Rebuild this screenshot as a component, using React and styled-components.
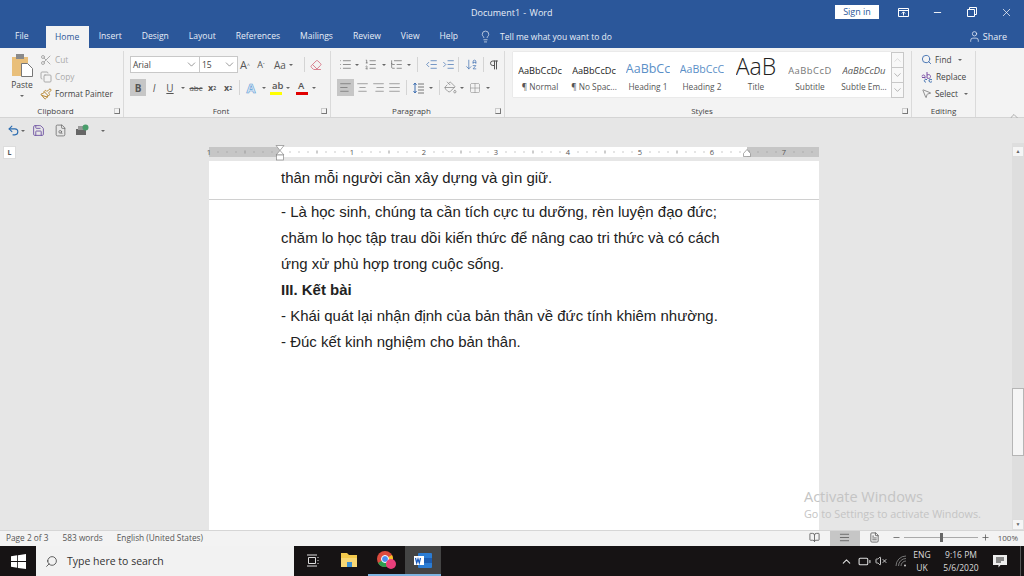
import React from 'react'
import styled, { createGlobalStyle } from 'styled-components'
import {
    Scissors, Copy, Paintbrush, Lightbulb, User, X, Minus, Search, ChevronUp, ChevronDown,
    AlignLeft, AlignCenter, AlignRight, AlignJustify, List, ListOrdered, ListTree, IndentDecrease,
    IndentIncrease, Pilcrow, Eraser, Undo2, Save, FileSearch, MousePointer2, PaintBucket, Grid2x2,
    ArrowDownAZ, BookOpen, FileText, VolumeX, Battery, Plus
} from 'lucide-react'

const GlobalStyle = createGlobalStyle`
    html, body { margin: 0; padding: 0; }
    body { width: 1024px; height: 576px; overflow: hidden; font-family: "Open Sans", "Liberation Sans", sans-serif; }
`

const Caret = () => <CaretMark />

const Ruler = () => {
    const ticks = []
    for (let i = 0; i < 8.5; i += 0.125) {
        if (i % 1 === 0) continue
        const half = i % 0.5 === 0
        ticks.push(<rect key={i} x={i * 72 - 0.5} y={half ? 3.5 : 4.5} width="1" height={half ? 3 : 1} fill="#999" />)
    }
    return (
        <RulerSvg width="610" height="10" viewBox="0 0 610 10">
            <rect width="610" height="10" fill="#fff" />
            <rect width="71" height="10" fill="#c6c6c6" />
            <rect x="538" width="72" height="10" fill="#c6c6c6" />
            {ticks}
            {[[0, 1], [143, 1], [215, 2], [287, 3], [359, 4], [431, 5], [503, 6], [575, 7]].map(([x, n]) => (
                <text key={x} x={x} y="8" fontSize="7.5" fontFamily="Open Sans" fill="#555" textAnchor="middle">{n}</text>
            ))}
            <path d="M67 -1.500h8l-4 5zM71 3.500l-4 4.500h8z" fill="#fff" stroke="#888" strokeWidth=".7" />
            <rect x="67.500" y="8" width="7" height="5" fill="#fff" stroke="#888" strokeWidth=".7" />
            <path d="M538 2.500l-3.500 4v3h7v-3z" fill="#fff" stroke="#888" strokeWidth=".7" />
        </RulerSvg>
    )
}

const styles = [
    { sample: 'AaBbCcDc', label: '¶ Normal', size: 9.2, color: '#222' },
    { sample: 'AaBbCcDc', label: '¶ No Spac...', size: 9.2, color: '#222' },
    { sample: 'AaBbCc', label: 'Heading 1', size: 12.5, color: '#5b8fc7' },
    { sample: 'AaBbCcC', label: 'Heading 2', size: 10.6, color: '#5b8fc7' },
    { sample: 'AaB', label: 'Title', size: 23, color: '#222', big: true },
    { sample: 'AaBbCcD', label: 'Subtitle', size: 9.4, color: '#777', spaced: true },
    { sample: 'AaBbCcDu', label: 'Subtle Em...', size: 9.4, color: '#555', italic: true },
]

const tabs = ['File', 'Home', 'Insert', 'Design', 'Layout', 'References', 'Mailings', 'Review', 'View', 'Help']

export default function App() {
    return (
        <Screen>
            <GlobalStyle />
            <TitleBar>
                <DocTitle>Document1 - Word</DocTitle>
                <SignIn>Sign in</SignIn>
                <WinButtons>
                    <WinButton><svg width="11" height="9" viewBox="0 0 11 9" fill="none" stroke="#fff"><path d="M.5.5h10v8H.5zM.5 2.500h10M5.500 7.500V4M3.800 5.500l1.700-1.700 1.700 1.700" /></svg></WinButton>
                    <WinButton><Minus size={11} color="#fff" /></WinButton>
                    <WinButton><svg width="10" height="10" viewBox="0 0 10 10" fill="none" stroke="#fff"><path d="M.5 2.500h7v7h-7zM2.500 2.500v-2h7v7h-2" /></svg></WinButton>
                    <WinButton><X size={13} color="#fff" strokeWidth={1.3} /></WinButton>
                </WinButtons>
            </TitleBar>

            <TabBar>
                {tabs.map(t => <Tab key={t} $active={t === 'Home'}>{t}</Tab>)}
                <TellMe><Lightbulb size={13} strokeWidth={1.3} />Tell me what you want to do</TellMe>
                <Share><User size={13} strokeWidth={1.4} />Share</Share>
            </TabBar>

            <Ribbon>
                <Group $width={124}>
                    <GroupBody>
                        <ClipboardRow>
                            <PasteButton>
                                <svg width="21" height="23" viewBox="0 0 21 23">
                                    <rect x="0" y="3" width="16" height="19" fill="#e9bf7a" />
                                    <rect x="4" y="0" width="8" height="5" fill="#8a8a8a" />
                                    <path d="M9.500 9.500h6l5 5v8h-11z" fill="#fff" stroke="#777" />
                                </svg>
                                <span>Paste</span>
                                <PasteCaret />
                            </PasteButton>
                            <ToolColumn>
                                <SmallTool $muted><Scissors size={12} color="#aaa" />Cut</SmallTool>
                                <SmallTool $muted><Copy size={12} color="#aaa" />Copy</SmallTool>
                                <SmallTool><Paintbrush size={12} color="#b8862f" />Format Painter</SmallTool>
                            </ToolColumn>
                        </ClipboardRow>
                    </GroupBody>
                    <GroupLabel $launcher>Clipboard<Launcher /></GroupLabel>
                </Group>

                <Group $width={207}>
                    <GroupBody>
                        <ToolRow>
                            <Select $width={70}>Arial<ChevronDown size={13} strokeWidth={1} /></Select>
                            <Select $width={39}>15<ChevronDown size={13} strokeWidth={1} /></Select>
                            <Glyph $width={16} $size={11}>A<sup>^</sup></Glyph>
                            <Glyph $width={16} $size={9}>A<sup>ˇ</sup></Glyph>
                            <Glyph $width={32} $size={10}>Aa<Caret /></Glyph>
                            <Divider />
                            <Glyph $width={16}><Eraser size={12} color="#d9808f" /></Glyph>
                        </ToolRow>
                        <ToolRow>
                            <Glyph $width={16} $active $bold>B</Glyph>
                            <Glyph $width={16} $italic>I</Glyph>
                            <Glyph $width={16} $underline>U</Glyph>
                            <Caret />
                            <Glyph $width={16} $size={8} $strike>abc</Glyph>
                            <Glyph $width={16} $bold $size={9}>x<sub>2</sub></Glyph>
                            <Glyph $width={16} $bold $size={9}>x<sup>2</sup></Glyph>
                            <Divider />
                            <OutlineGlyph>A</OutlineGlyph><Caret />
                            <ColorGlyph $bar="#ffff00">ab<Caret /></ColorGlyph>
                            <ColorGlyph $bar="#e00000">A<Caret /></ColorGlyph>
                        </ToolRow>
                    </GroupBody>
                    <GroupLabel $launcher>Font<Launcher /></GroupLabel>
                </Group>

                <Group $width={174}>
                    <GroupBody>
                        <ToolRow $pad={7}>
                            <Glyph $width={14}><List size={13} color="#666" strokeWidth={1.3} /></Glyph><Caret />
                            <Glyph $width={17}><ListOrdered size={13} color="#666" strokeWidth={1.3} /></Glyph><Caret />
                            <Glyph $width={15}><ListTree size={13} color="#666" strokeWidth={1.3} /></Glyph><Caret />
                            <Divider />
                            <Glyph $width={20}><IndentDecrease size={13} color="#3f6fb0" strokeWidth={1.3} /></Glyph>
                            <Glyph $width={14}><IndentIncrease size={13} color="#3f6fb0" strokeWidth={1.3} /></Glyph>
                            <Divider />
                            <Glyph $width={18}><ArrowDownAZ size={13} color="#3f6fb0" strokeWidth={1.3} /></Glyph>
                            <Divider />
                            <Glyph $width={14}><Pilcrow size={12} color="#555" /></Glyph>
                        </ToolRow>
                        <ToolRow $pad={6}>
                            <Glyph $width={17} $active><AlignLeft size={13} color="#666" strokeWidth={1.2} /></Glyph>
                            <Glyph $width={16}><AlignCenter size={13} color="#777" strokeWidth={1.2} /></Glyph>
                            <Glyph $width={16}><AlignRight size={13} color="#777" strokeWidth={1.2} /></Glyph>
                            <Glyph $width={17}><AlignJustify size={13} color="#777" strokeWidth={1.2} /></Glyph>
                            <Divider />
                            <Glyph $width={16}>
                                <svg width="11" height="12" viewBox="0 0 11 12" fill="none"><path d="M5 2h6M5 5h6M5 8h6M5 11h6" stroke="#777" /><path d="M2 1v10M.5 3L2 1l1.500 2M.5 9L2 11l1.500-2" stroke="#3f6fb0" /></svg>
                            </Glyph><Caret />
                            <Divider />
                            <Glyph $width={14}><PaintBucket size={13} color="#777" strokeWidth={1.2} /></Glyph><Caret />
                            <Glyph $width={16}><Grid2x2 size={12} color="#888" strokeWidth={1} strokeDasharray="1.500 1" /></Glyph><Caret />
                        </ToolRow>
                    </GroupBody>
                    <GroupLabel $launcher>Paragraph<Launcher /></GroupLabel>
                </Group>

                <Group $width={407}>
                    <GalleryRow>
                        <Gallery>
                            {styles.map(s => (
                                <StyleItem key={s.label}>
                                    <StyleSample $size={s.size} $color={s.color} $italic={s.italic} $spaced={s.spaced} $big={s.big}>{s.sample}</StyleSample>
                                    <StyleLabel>{s.label}</StyleLabel>
                                </StyleItem>
                            ))}
                        </Gallery>
                        <GalleryArrows>
                            <GalleryArrow><ChevronUp size={12} strokeWidth={1} color="#bbb" /></GalleryArrow>
                            <GalleryArrow><ChevronDown size={12} strokeWidth={1} /></GalleryArrow>
                            <GalleryArrow><ChevronDown size={12} strokeWidth={1} /></GalleryArrow>
                        </GalleryArrows>
                    </GalleryRow>
                    <GroupLabel $launcher>Styles<Launcher /></GroupLabel>
                </Group>

                <Group $width={64}>
                    <EditColumn>
                        <SmallTool><Search size={11} color="#3f6fb0" />Find<Caret /></SmallTool>
                        <SmallTool>
                            <svg width="12" height="12" viewBox="0 0 12 12" fill="none" stroke="#7b4fa5"><path d="M1 5.500c0-2 3-2 3 0v2M1 6.500h3M6 1v6c2 1 3.500 0 3.500-1.500S8 3 6 4" /><path d="M5 11c-2 .5-3-3 1-2.500M11 9c-1-1.500-3.500-.5-3 1s2 1.500 3 .5" stroke="#3f6fb0" /></svg>
                            Replace
                        </SmallTool>
                        <SmallTool><MousePointer2 size={11} color="#888" />Select<Caret /></SmallTool>
                    </EditColumn>
                    <GroupLabel>Editing</GroupLabel>
                </Group>
                <Collapse><ChevronUp size={12} strokeWidth={1} color="#666" /></Collapse>
            </Ribbon>

            <QuickBar>
                <QuickSlot $width={14}><Undo2 size={13} color="#2b6cb0" strokeWidth={2} /></QuickSlot>
                <QuickSlot $width={6}><Caret /></QuickSlot>
                <QuickSlot $width={24}><Save size={13} color="#6b4ea0" strokeWidth={1.6} /></QuickSlot>
                <QuickSlot $width={20}><FileSearch size={13} color="#666" strokeWidth={1.4} /></QuickSlot>
                <QuickSlot $width={24}>
                    <svg width="14" height="13" viewBox="0 0 14 13"><rect x="1" y="5" width="10" height="6" fill="#666" /><rect x="3" y="2" width="6" height="4" fill="#999" /><circle cx="10.500" cy="3.500" r="3" fill="#4a9d6b" /></svg>
                </QuickSlot>
                <QuickSlot $width={18}><Caret /></QuickSlot>
            </QuickBar>

            <DocArea>
                <Gutter><TabStop>L</TabStop></Gutter>
                <DocColumn>
                    <Ruler />
                    <Sheet>
                        <PrevPage>
                            <Line>thân mỗi người cần xây dựng và gìn giữ.</Line>
                        </PrevPage>
                        <NextPage>
                            <Line>- Là học sinh, chúng ta cần tích cực tu dưỡng, rèn luyện đạo đức;</Line>
                            <Line>chăm lo học tập trau dồi kiến thức để nâng cao tri thức và có cách</Line>
                            <Line>ứng xử phù hợp trong cuộc sống.</Line>
                            <Line $bold>III. Kết bài</Line>
                            <Line>- Khái quát lại nhận định của bản thân về đức tính khiêm nhường.</Line>
                            <Line>- Đúc kết kinh nghiệm cho bản thân.</Line>
                        </NextPage>
                    </Sheet>
                </DocColumn>
                <RightGutter />
                <ScrollBar>
                    <ScrollArrow>▲</ScrollArrow>
                    <ScrollTrack><ScrollThumb /></ScrollTrack>
                    <ScrollArrow>▼</ScrollArrow>
                </ScrollBar>
                <Activate>
                    <ActivateTitle>Activate Windows</ActivateTitle>
                    <ActivateText>Go to Settings to activate Windows.</ActivateText>
                </Activate>
            </DocArea>

            <StatusBar>
                <StatusText>Page 2 of 3</StatusText>
                <StatusText>583 words</StatusText>
                <StatusText>English (United States)</StatusText>
                <StatusRight>
                    <ViewBtn><BookOpen size={11} color="#666" /></ViewBtn>
                    <ViewBtn $active><AlignJustify size={11} color="#666" /></ViewBtn>
                    <ViewBtn><FileText size={11} color="#666" /></ViewBtn>
                    <ZoomMinus size={9} color="#555" />
                    <ZoomTrack><ZoomThumb /></ZoomTrack>
                    <Plus size={9} color="#555" />
                    <ZoomValue>100%</ZoomValue>
                </StatusRight>
            </StatusBar>

            <TaskBar>
                <StartBtn>
                    <svg width="15" height="15" viewBox="0 0 15 15" fill="#fff"><path d="M0 2.200l6.200-.9v5.800H0zM7 1.200L15 0v7.100H7zM0 7.900h6.200v5.800L0 12.800zM7 7.900h8V15l-8-1.100z" /></svg>
                </StartBtn>
                <SearchBox><SearchGlass size={13} strokeWidth={1.4} color="#333" />Type here to search</SearchBox>
                <TaskIcon $width={36}>
                    <svg width="13" height="13" viewBox="0 0 13 13" fill="none" stroke="#ddd"><path d="M2.500 3.500h7v6h-7zM1 1h10M1 12h10M12 3v1M12 6v1M12 9v1" /></svg>
                </TaskIcon>
                <TaskIcon $width={38}>
                    <svg width="17" height="14" viewBox="0 0 17 14"><path d="M0 0h6l2 2h8v12H0z" fill="#f2c94c" /><rect x="0" y="5" width="16" height="9" fill="#f7d774" /><rect x="6" y="9" width="5" height="5" fill="#3d8fd1" /></svg>
                </TaskIcon>
                <TaskIcon $width={37} $open>
                    <svg width="19" height="18" viewBox="0 0 19 18">
                        <circle cx="8" cy="8" r="8" fill="#dd4b3e" />
                        <path d="M8 8L1 12a8 8 0 0 0 9 3.700z" fill="#2d9d4f" />
                        <path d="M8 8l2 7.700A8 8 0 0 0 15 4z" fill="#f6c026" />
                        <circle cx="8" cy="8" r="3.500" fill="#4a8cf0" stroke="#fff" />
                        <circle cx="14" cy="13" r="5" fill="#e83e7b" />
                    </svg>
                </TaskIcon>
                <TaskIcon $width={36} $open $current>
                    <svg width="18" height="15" viewBox="0 0 18 15">
                        <rect x="4" y="0" width="14" height="15" rx="1" fill="#2b7cd3" />
                        <rect x="4" y="5" width="14" height="5" fill="#1c5cb0" />
                        <rect x="0" y="3" width="10" height="9" fill="#fff" />
                        <path d="M1.500 5l1.200 5 1.300-4 1.300 4 1.200-5" fill="none" stroke="#185abd" strokeWidth="1.200" />
                    </svg>
                </TaskIcon>
                <Tray>
                    <TraySlot $width={17}><ChevronUp size={13} color="#ddd" /></TraySlot>
                    <TraySlot $width={18}><Battery size={13} color="#ddd" /></TraySlot>
                    <TraySlot $width={16}><VolumeX size={12} color="#ccc" /></TraySlot>
                    <TraySlot $width={24}>
                        <svg width="12" height="12" viewBox="0 0 12 12" fill="none" stroke="#777"><path d="M1 11A10 10 0 0 1 11 1M3.500 11A7.500 7.500 0 0 1 11 3.500M6 11a5 5 0 0 1 5-5" /><circle cx="10" cy="10.500" r="1" fill="#ccc" stroke="none" /></svg>
                    </TraySlot>
                    <TraySlot $width={18}><TrayText>ENG<br />UK</TrayText></TraySlot>
                    <TraySlot $width={60}><TrayText>9:16 PM<br />5/6/2020</TrayText></TraySlot>
                    <TraySlot $width={18}>
                        <svg width="14" height="14" viewBox="0 0 14 14"><path d="M0 1h14v10H7.500l-2 2.500V11H0z" fill="#eee" /><path d="M3 4h8M3 6h8M3 8h5" stroke="#222" /></svg>
                    </TraySlot>
                    <ShowDesktop />
                </Tray>
            </TaskBar>
        </Screen>
    )
}

const Screen = styled.div`
    width: 1024px;
    height: 576px;
    display: flex;
    flex-direction: column;
    background: #e6e6e6;
    color: #444;
`

const TitleBar = styled.div`
    height: 24px;
    background: #2b579a;
    display: flex;
    align-items: center;
    flex-shrink: 0;
`

const DocTitle = styled.div`
    color: #e8eef7;
    font-size: 9px;
    margin-left: 471px;
    width: 364px;
    flex-shrink: 0;
    word-spacing: 1px;
`

const SignIn = styled.div`
    width: 44px;
    height: 14px;
    flex-shrink: 0;
    background: #fff;
    color: #2b579a;
    font-size: 9px;
    line-height: 14px;
    text-align: center;
`

const WinButtons = styled.div`
    display: flex;
    margin-left: 7px;
`

const WinButton = styled.div`
    width: 34.500px;
    display: flex;
    justify-content: center;
    align-items: center;
`

const TabBar = styled.div`
    height: 24px;
    background: #2b579a;
    display: flex;
    align-items: stretch;
    padding-left: 5px;
    flex-shrink: 0;
`

const Tab = styled.div`
    padding: 0 10px;
    font-size: 8.550px;
    line-height: 25px;
    color: ${props => props.$active ? '#2b579a' : '#e8eef7'};
    background: ${props => props.$active ? '#f3f3f3' : 'transparent'};
    ${props => props.$active && 'margin: 2px 0 0 7px; padding: 0 9.500px; line-height: 23px;'}
`

const TellMe = styled.div`
    display: flex;
    align-items: center;
    gap: 8px;
    margin-left: 11px;
    color: #e8eef7;
    font-size: 8.500px;
`

const Share = styled.div`
    display: flex;
    align-items: center;
    gap: 2px;
    margin-left: auto;
    margin-right: 17px;
    color: #e8eef7;
    font-size: 9px;
`

const Ribbon = styled.div`
    height: 70px;
    background: #f3f3f3;
    border-bottom: 1px solid #d4d4d4;
    box-sizing: border-box;
    display: flex;
    flex-shrink: 0;
`

const Group = styled.div`
    width: ${props => props.$width}px;
    box-sizing: border-box;
    flex-shrink: 0;
    display: flex;
    flex-direction: column;
    border-right: 1px solid #dadada;
    margin-top: 3px;
    min-height: 0;
`

const GroupBody = styled.div`
    flex: 1;
    min-height: 0;
    display: flex;
    flex-direction: column;
    gap: 6px;
    padding-top: 4px;
`

const GroupLabel = styled.div`
    position: relative;
    flex-shrink: 0;
    height: 13px;
    line-height: 13px;
    text-align: center;
    font-size: 8px;
    color: #444;
    padding-right: ${props => props.$launcher ? 12 : 0}px;
`

const Launcher = styled.i`
    position: absolute;
    right: 3px;
    top: 4px;
    width: 4px;
    height: 4px;
    border: 1px solid #ccc;
    border-right-color: #777;
    border-bottom-color: #777;
`

const ClipboardRow = styled.div`
    display: flex;
    flex: 1;
    margin-top: -4px;
`

const PasteButton = styled.div`
    width: 40px;
    box-sizing: border-box;
    display: flex;
    flex-direction: column;
    align-items: center;
    padding: 3px 0 0 4px;
    font-size: 8.500px;
    line-height: 11px;
    gap: 2px;
`

const ToolColumn = styled.div`
    display: flex;
    flex-direction: column;
`

const EditColumn = styled(ToolColumn)`
    flex: 1;
    min-height: 0;
    padding-left: 9px;
`

const SmallTool = styled.div`
    display: flex;
    align-items: center;
    gap: 3px;
    height: 17px;
    font-size: 8.300px;
    white-space: nowrap;
    color: ${props => props.$muted ? '#aaa' : '#444'};
`

const ToolRow = styled.div`
    display: flex;
    align-items: center;
    height: 17px;
    flex-shrink: 0;
    padding-left: ${props => props.$pad ?? 6}px;
    &:first-child { margin-top: 1px; }
`

const Select = styled.div`
    width: ${props => props.$width}px;
    height: 17px;
    box-sizing: border-box;
    background: #fff;
    border: 1px solid #c8c8c8;
    margin-right: -1px;
    padding: 0 1px 0 2px;
    display: flex;
    justify-content: space-between;
    align-items: center;
    font-size: 8.500px;
    flex-shrink: 0;
`

const Glyph = styled.div`
    width: ${props => props.$width}px;
    height: 17px;
    flex-shrink: 0;
    display: flex;
    align-items: center;
    justify-content: center;
    font-size: ${props => props.$size ?? 10}px;
    font-weight: ${props => props.$bold ? 700 : 400};
    font-style: ${props => props.$italic ? 'italic' : 'normal'};
    text-decoration: ${props => props.$underline ? 'underline' : props.$strike ? 'line-through' : 'none'};
    color: #555;
    background: ${props => props.$active ? '#c6c6c6' : 'transparent'};
    sup, sub { font-size: 5px; }
`

const OutlineGlyph = styled.div`
    width: 16px;
    flex-shrink: 0;
    text-align: center;
    font-size: 13px;
    font-weight: 700;
    color: #dbe9f7;
    -webkit-text-stroke: .6px #5b9bd5;
`

const ColorGlyph = styled.div`
    position: relative;
    width: 26px;
    height: 17px;
    flex-shrink: 0;
    font-size: 9.500px;
    font-weight: 600;
    color: #555;
    line-height: 13px;
    padding-left: 3px;
    box-sizing: border-box;
    &::after {
        content: "";
        position: absolute;
        left: 1px;
        bottom: 1px;
        width: 12px;
        height: 3px;
        background: ${props => props.$bar};
    }
    i { position: absolute; right: 5px; top: 8px; margin: 0; }
`

const CaretMark = styled.i`
    display: inline-block;
    width: 0;
    height: 0;
    margin: 0 3px;
    border: 2px solid transparent;
    border-top: 2.500px solid #666;
    border-bottom: 0;
    flex-shrink: 0;
`

const PasteCaret = styled(CaretMark)`
    margin-top: 3px;
`

const Divider = styled.div`
    width: 1px;
    height: 15px;
    background: #d4d4d4;
    margin: 0 3px;
    flex-shrink: 0;
`

const GalleryRow = styled.div`
    flex: 1;
    min-height: 0;
    display: flex;
    padding: 1px 0 0 8px;
`

const Gallery = styled.div`
    width: 378px;
    height: 45px;
    background: #fff;
    box-shadow: 0 0 1px #bbb;
    display: flex;
    overflow: hidden;
`

const StyleItem = styled.div`
    width: 54px;
    flex-shrink: 0;
    display: flex;
    flex-direction: column;
    align-items: center;
    overflow: hidden;
`

const StyleSample = styled.div`
    height: 23px;
    margin-top: 5px;
    max-width: 45px;
    overflow: hidden;
    white-space: nowrap;
    display: flex;
    align-items: flex-end;
    line-height: 1;
    font-size: ${props => props.$size}px;
    font-weight: ${props => props.$big ? 300 : 400};
    color: ${props => props.$color};
    font-style: ${props => props.$italic ? 'italic' : 'normal'};
    letter-spacing: ${props => props.$spaced ? '.5px' : '0'};
    padding-bottom: ${props => props.$big ? 2 : 5}px;
    box-sizing: border-box;
`

const StyleLabel = styled.div`
    font-size: 8.300px;
    line-height: 14px;
    color: #555;
    white-space: nowrap;
`

const GalleryArrows = styled.div`
    width: 13px;
    height: 45px;
    display: flex;
    flex-direction: column;
`

const GalleryArrow = styled.div`
    flex: 1;
    display: flex;
    align-items: center;
    justify-content: center;
    background: #f8f8f8;
    border: 1px solid #c8c8c8;
    margin-bottom: -1px;
    color: #666;
`

const Collapse = styled.div`
    margin-left: auto;
    margin-right: 4px;
    align-self: flex-end;
    height: 12px;
`

const QuickBar = styled.div`
    height: 25px;
    flex-shrink: 0;
    display: flex;
    align-items: center;
    padding-left: 6px;
    box-sizing: border-box;
    background: #e6e6e6;
`

const QuickSlot = styled.div`
    width: ${props => props.$width}px;
    display: flex;
    justify-content: center;
    i { margin: 0; }
`

const DocArea = styled.div`
    position: relative;
    flex: 1;
    min-height: 0;
    display: flex;
    background: #e6e6e6;
`

const Gutter = styled.div`
    width: 209px;
    flex-shrink: 0;
`

const TabStop = styled.div`
    width: 11px;
    height: 11px;
    margin: 3px 0 0 3px;
    background: #fff;
    border: 1px solid #ddd;
    font-size: 7px;
    font-weight: 700;
    line-height: 11px;
    text-align: center;
    color: #555;
`

const DocColumn = styled.div`
    width: 610px;
    flex-shrink: 0;
    display: flex;
    flex-direction: column;
    padding-top: 4px;
    box-sizing: border-box;
`

const RulerSvg = styled.svg`
    display: block;
    flex-shrink: 0;
    margin-bottom: 4px;
    overflow: visible;
`

const Sheet = styled.div`
    flex: 1;
    background: #fff;
    font-family: "Liberation Sans", Arial, sans-serif;
    font-size: 14.970px;
    color: #222;
`

const PrevPage = styled.div`
    height: 39px;
    border-bottom: 1px solid #d0d0d0;
    padding: 4px 0 0 72px;
    box-sizing: border-box;
`

const NextPage = styled.div`
    margin-top: -1px;
    padding-left: 72px;
`

const Line = styled.div`
    height: 26px;
    line-height: 26px;
    white-space: nowrap;
    font-weight: ${props => props.$bold ? 700 : 400};
`

const RightGutter = styled.div`
    flex: 1;
`

const ScrollBar = styled.div`
    width: 12px;
    flex-shrink: 0;
    display: flex;
    flex-direction: column;
    padding-top: 3px;
    box-sizing: border-box;
    background: #dedede;
`

const ScrollArrow = styled.div`
    height: 11px;
    background: #f5f5f5;
    border: 1px solid #ddd;
    box-sizing: border-box;
    font-size: 5px;
    line-height: 9px;
    text-align: center;
    color: #666;
    flex-shrink: 0;
`

const ScrollTrack = styled.div`
    flex: 1;
    padding-top: 231px;
`

const ScrollThumb = styled.div`
    height: 68px;
    background: #f5f5f5;
    border: 1px solid #b5b5b5;
    box-sizing: border-box;
`

const Activate = styled.div`
    position: absolute;
    left: 804px;
    top: 345px;
    pointer-events: none;
`

const ActivateTitle = styled.div`
    font-size: 14.500px;
    line-height: 18px;
    color: #c4c4c4;
`

const ActivateText = styled.div`
    font-size: 10.800px;
    line-height: 16px;
    color: #c4c4c4;
`

const StatusBar = styled.div`
    height: 16px;
    flex-shrink: 0;
    background: #f3f3f3;
    border-top: 1px solid #d6d6d6;
    box-sizing: border-box;
    display: flex;
    align-items: center;
    padding-left: 6px;
    gap: 14px;
`

const StatusText = styled.div`
    font-size: 8.300px;
    color: #555;
    margin-bottom: 2px;
`

const StatusRight = styled.div`
    margin-left: auto;
    display: flex;
    align-items: center;
    height: 100%;
    svg { margin-bottom: 2px; }
`

const ViewBtn = styled.div`
    width: 30px;
    height: 100%;
    display: flex;
    align-items: center;
    justify-content: center;
    background: ${props => props.$active ? '#c6c6c6' : 'transparent'};
`

const ZoomMinus = styled(Minus)`
    margin-left: 2px;
`

const ZoomTrack = styled.div`
    position: relative;
    width: 74px;
    height: 1px;
    background: #aaa;
    margin: 0 3px 2px;
`

const ZoomThumb = styled.div`
    position: absolute;
    left: 36px;
    top: -4px;
    width: 3px;
    height: 9px;
    background: #666;
`

const ZoomValue = styled.div`
    font-size: 8px;
    color: #555;
    margin: 0 6px 2px 8px;
`

const TaskBar = styled.div`
    height: 30px;
    flex-shrink: 0;
    background: #161314;
    display: flex;
    align-items: stretch;
`

const StartBtn = styled.div`
    width: 36px;
    display: flex;
    align-items: center;
    justify-content: center;
`

const SearchBox = styled.div`
    width: 258px;
    box-sizing: border-box;
    background: #f2f2f2;
    display: flex;
    align-items: center;
    gap: 9px;
    padding-left: 9px;
    font-size: 10.500px;
    color: #333;
`

const SearchGlass = styled(Search)`
    transform: scaleX(-1);
`

const TaskIcon = styled.div`
    width: ${props => props.$width}px;
    display: flex;
    align-items: center;
    justify-content: center;
    box-sizing: border-box;
    background: ${props => props.$current ? '#444' : 'transparent'};
    border-bottom: 2px solid ${props => props.$open ? '#7db4e0' : 'transparent'};
`

const Tray = styled.div`
    margin-left: auto;
    display: flex;
    align-items: center;
    color: #ddd;
    height: 100%;
    padding-right: 3px;
`

const TraySlot = styled.div`
    width: ${props => props.$width}px;
    display: flex;
    justify-content: center;
    align-items: center;
`

const TrayText = styled.div`
    font-size: 8.500px;
    line-height: 13px;
    text-align: center;
    white-space: nowrap;
`

const ShowDesktop = styled.div`
    width: 1px;
    height: 100%;
    background: #555;
    margin-left: 11px;
`
